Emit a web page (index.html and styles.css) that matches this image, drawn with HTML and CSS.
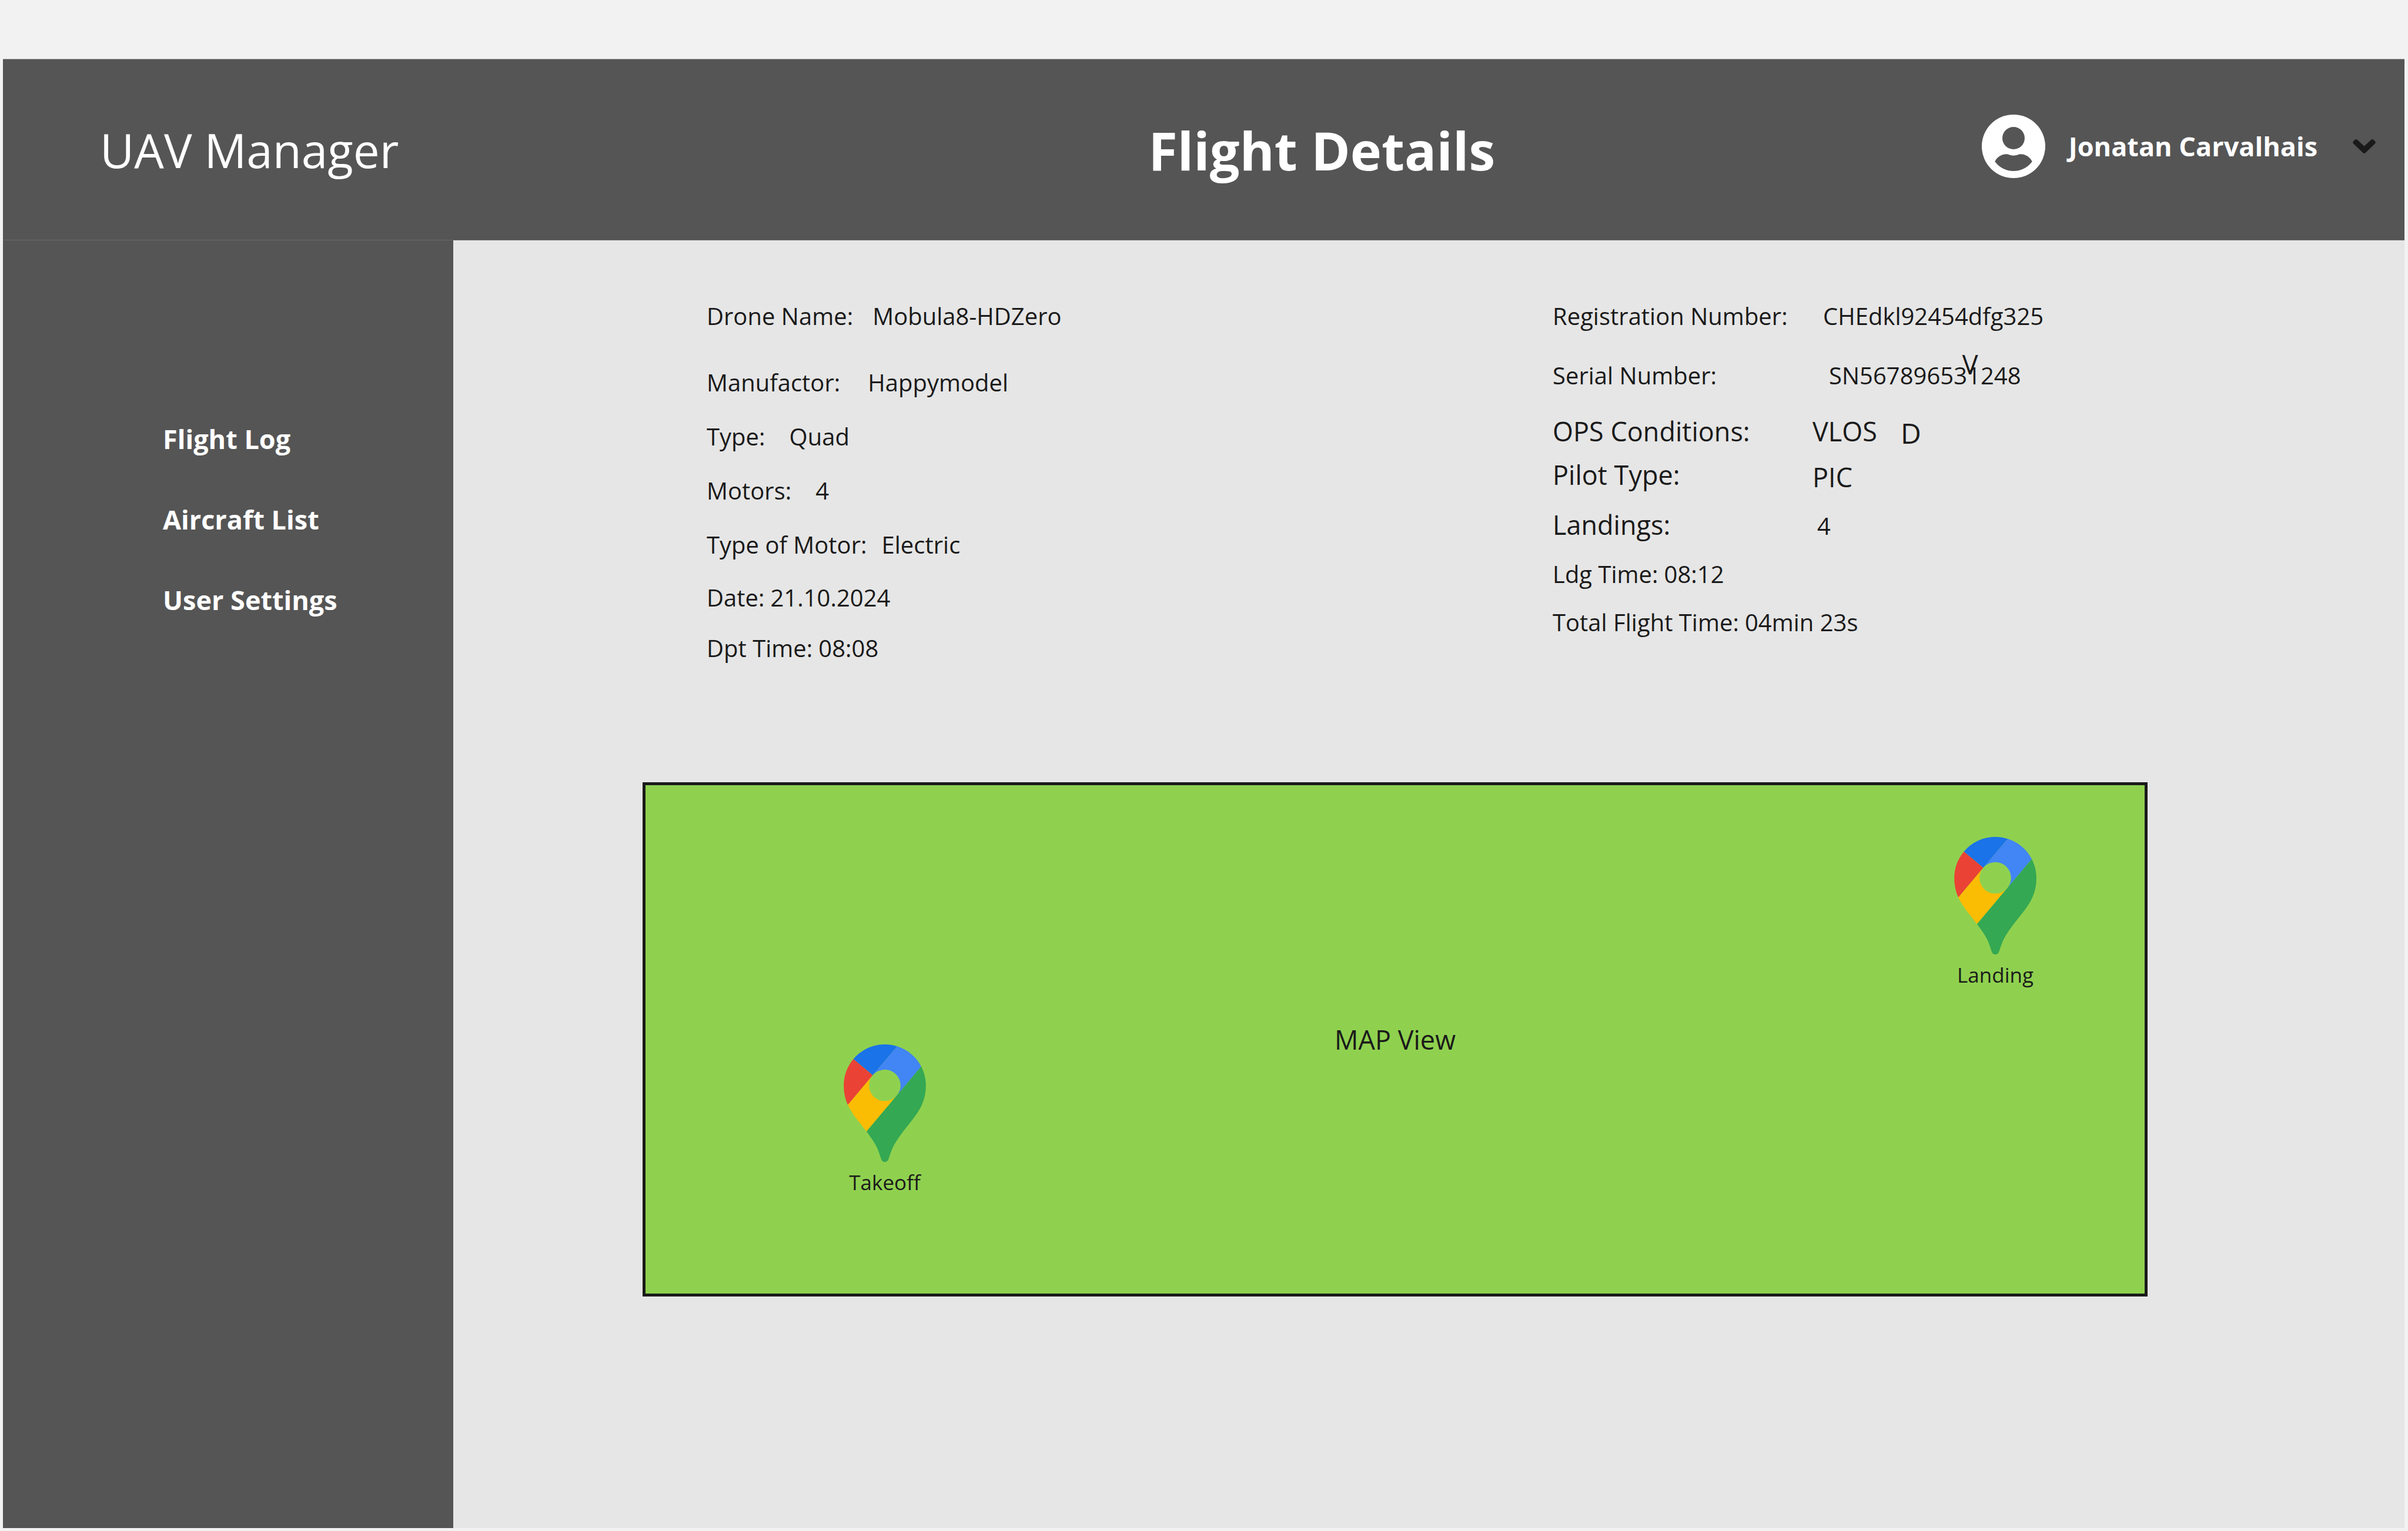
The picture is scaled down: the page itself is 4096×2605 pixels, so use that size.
FILE: index.html
```html
<!DOCTYPE html>
<html lang="en">
<head>
  <meta charset="utf-8">
  <meta name="viewport" content="width=device-width, initial-scale=1">
  <title>UAV Manager – Flight Details</title>
  <link rel="stylesheet" href="styles.css">
</head>
<body>
  <svg class="sprite" aria-hidden="true">
    <symbol id="map-pin" viewBox="0 0 92.3 132.3">
      <path fill="#1a73e8" d="M60.2 2.2C55.8.8 51 0 46.1 0 32 0 19.3 6.4 10.8 16.5l21.8 18.3L60.2 2.2z"/>
      <path fill="#ea4335" d="M10.8 16.5C4.1 24.5 0 34.9 0 46.1c0 8.7 1.7 15.7 4.6 22l28-33.3-21.8-18.3z"/>
      <path fill="#4285f4" d="M46.2 28.5c9.8 0 17.7 7.9 17.7 17.7 0 4.3-1.6 8.3-4.2 11.4 0 0 13.9-16.6 27.5-32.7-5.6-10.8-15.3-19-27-22.7L32.6 34.8c3.3-3.8 8.1-6.3 13.6-6.3"/>
      <path fill="#fbbc04" d="M46.2 63.8c-9.8 0-17.7-7.9-17.7-17.7 0-4.3 1.5-8.3 4.1-11.3l-28 33.3c4.8 10.6 12.8 19.2 21 29.9l34.1-40.5c-3.3 3.9-8.1 6.3-13.5 6.3"/>
      <path fill="#34a853" d="M59.1 109.2c15.4-24.1 33.3-35 33.3-63 0-7.7-1.9-14.9-5.2-21.3L25.6 98c2.6 3.4 5.3 7.3 7.9 11.3 9.4 14.5 6.8 23.1 12.8 23.1s3.4-8.7 12.8-23.2"/>
    </symbol>
  </svg>

  <div class="app">
    <header class="header">
      <div class="brand">UAV Manager</div>
      <h1 class="title">Flight Details</h1>
      <button class="user" type="button">
        <svg class="avatar" viewBox="0 0 108 108" aria-hidden="true">
          <circle cx="54" cy="54" r="54" fill="#fff"/>
          <circle cx="54" cy="40" r="19" fill="#555"/>
          <path fill="#555" d="M22.3 80C26 72 34 67.3 42 67.3c4 0 6 2.4 12 2.4s8-2.4 12-2.4c8 0 16 4.700 19.700 12.700C78 90 67 96 54 96s-24-6-31.700-16z"/>
        </svg>
        <span class="user-name">Jonatan Carvalhais</span>
        <svg class="chevron" viewBox="0 0 39 24" aria-hidden="true">
          <path fill="#1a1a1a" d="M1.200 7.500a3 3 0 0 1 0-4.200L3.700 1a3 3 0 0 1 4.200 0l11.600 10.800L31.100 1a3 3 0 0 1 4.200 0l2.500 2.300a3 3 0 0 1 0 4.200L21.600 23a3 3 0 0 1-4.200 0z"/>
        </svg>
      </button>
    </header>

    <div class="body">
      <nav class="sidebar" aria-label="Main">
        <a href="#flight-log">Flight Log</a>
        <a href="#aircraft-list">Aircraft List</a>
        <a href="#user-settings">User Settings</a>
      </nav>

      <main class="content">
        <section class="details">
          <dl class="facts facts-aircraft">
            <div class="fact gap-m"><dt>Drone Name:</dt><dd>Mobula8-HDZero</dd></div>
            <div class="fact gap-xl"><dt>Manufactor:</dt><dd>Happymodel</dd></div>
            <div class="fact gap-l"><dt>Type:</dt><dd>Quad</dd></div>
            <div class="fact gap-l"><dt>Motors:</dt><dd>4</dd></div>
            <div class="fact gap-s"><dt>Type of Motor:</dt><dd>Electric</dd></div>
            <div class="fact"><dt>Date:</dt><dd>21.10.2024</dd></div>
            <div class="fact"><dt>Dpt Time:</dt><dd>08:08</dd></div>
          </dl>

          <dl class="facts facts-flight">
            <div class="fact columns"><dt>Registration Number:</dt><dd class="indent-m">CHEdkl92454dfg325</dd></div>
            <div class="fact columns"><dt>Serial Number:</dt><dd class="indent-l"><span class="marked">SN567896531248<span class="mark">V</span></span></dd></div>
            <div class="fact columns large"><dt>OPS Conditions:</dt><dd class="pair"><span>VLOS</span><span class="category">D</span></dd></div>
            <div class="fact columns large"><dt>Pilot Type:</dt><dd class="tall">PIC</dd></div>
            <div class="fact columns large"><dt>Landings:</dt><dd class="count indent-s">4</dd></div>
            <div class="fact"><dt>Ldg Time:</dt><dd>08:12</dd></div>
            <div class="fact"><dt>Total Flight Time:</dt><dd>04min 23s</dd></div>
          </dl>
        </section>

        <section class="map" aria-label="Map">
          <p class="map-title">MAP View</p>
          <figure class="pin pin-takeoff">
            <svg class="pin-icon" aria-hidden="true"><use href="#map-pin"/></svg>
            <figcaption>Takeoff</figcaption>
          </figure>
          <figure class="pin pin-landing">
            <svg class="pin-icon" aria-hidden="true"><use href="#map-pin"/></svg>
            <figcaption>Landing</figcaption>
          </figure>
        </section>
      </main>
    </div>
  </div>
</body>
</html>
```
FILE: styles.css
```css
* {
  box-sizing: border-box;
}

body,
h1,
p,
dl,
dd,
figure {
  margin: 0;
}

body {
  background: #f2f2f2;
  color: #1a1a1a;
  font-family: "Open Sans", "Noto Sans", sans-serif;
  font-size: 40px;
  line-height: 56px;
}

.sprite {
  display: none;
}

.app {
  display: flex;
  flex-direction: column;
  min-height: 100vh;
  padding: 100px 6px 5px 5px;
}

/* Header */

.header {
  display: grid;
  grid-template-columns: 1783fr 1417fr auto;
  align-items: center;
  height: 309px;
  padding: 0 49px 0 165px;
  background: #555;
  border-top: 1px solid #a8a8a8;
  border-bottom: 1px solid #6b6b6b;
  color: #fff;
}

.brand {
  font-size: 80px;
  line-height: 112px;
}

.title {
  font-size: 90px;
  line-height: 124px;
}

.user {
  display: flex;
  align-items: center;
  gap: 40px;
  padding: 0 0 12px;
  border: 0;
  background: none;
  color: inherit;
  font: inherit;
  cursor: pointer;
}

.avatar {
  width: 108px;
  height: 108px;
}

.user-name {
  font-size: 45px;
  font-weight: 700;
  line-height: 60px;
}

.chevron {
  width: 39px;
  height: 24px;
  margin-left: 20px;
}

/* Sidebar */

.body {
  display: flex;
  flex: 1;
}

.sidebar {
  display: flex;
  flex-direction: column;
  flex: none;
  gap: 77px;
  width: 766px;
  padding: 308px 0 0 272px;
  background: #555;
}

.sidebar a {
  color: #fff;
  font-size: 45px;
  font-weight: 700;
  line-height: 60px;
  text-decoration: none;
}

/* Flight facts */

.content {
  flex: 1;
  background: #e6e6e6;
}

.details {
  display: grid;
  grid-template-columns: 1439fr 1449fr;
  padding: 101px 0 0 431px;
}

.facts {
  display: grid;
}

.facts-aircraft {
  grid-template-rows: 113px 92px 92px 92px 90px 86px 256px;
}

.facts-flight {
  grid-template-rows: 101px 95px 74px 85px 84px 82px auto;
}

.fact {
  display: flex;
  align-items: flex-start;
  gap: 10px;
}

.gap-s {
  gap: 25px;
}

.gap-m {
  gap: 33px;
}

.gap-l {
  gap: 41px;
}

.gap-xl {
  gap: 47px;
}

.columns {
  display: grid;
  grid-template-columns: 442px 1fr;
  gap: 0;
}

.large {
  font-size: 45px;
}

.indent-s {
  padding-left: 8px;
}

.indent-m {
  padding-left: 18px;
}

.indent-l {
  padding-left: 28px;
}

.pair {
  display: flex;
  align-items: flex-start;
  gap: 40px;
}

.category {
  font-size: 48px;
  line-height: 62px;
}

.tall {
  line-height: 64px;
}

.count {
  font-size: 40px;
  line-height: 60px;
}

.marked {
  position: relative;
}

.mark {
  position: absolute;
  top: -19px;
  right: 73px;
  font-size: 45px;
}

/* Map */

.map {
  position: relative;
  display: grid;
  place-items: center;
  height: 875px;
  margin: 0 437px 0 322px;
  background: #8fd14f;
  border: 5px solid #1a1a1a;
}

.map-title {
  font-size: 45px;
}

.pin {
  position: absolute;
  display: flex;
  flex-direction: column;
  align-items: center;
  gap: 11px;
  font-size: 35px;
  line-height: 48px;
}

.pin-takeoff {
  top: 441px;
  left: 337px;
}

.pin-landing {
  top: 88px;
  right: 184px;
}

.pin-icon {
  width: 140px;
  height: 200px;
}
```
